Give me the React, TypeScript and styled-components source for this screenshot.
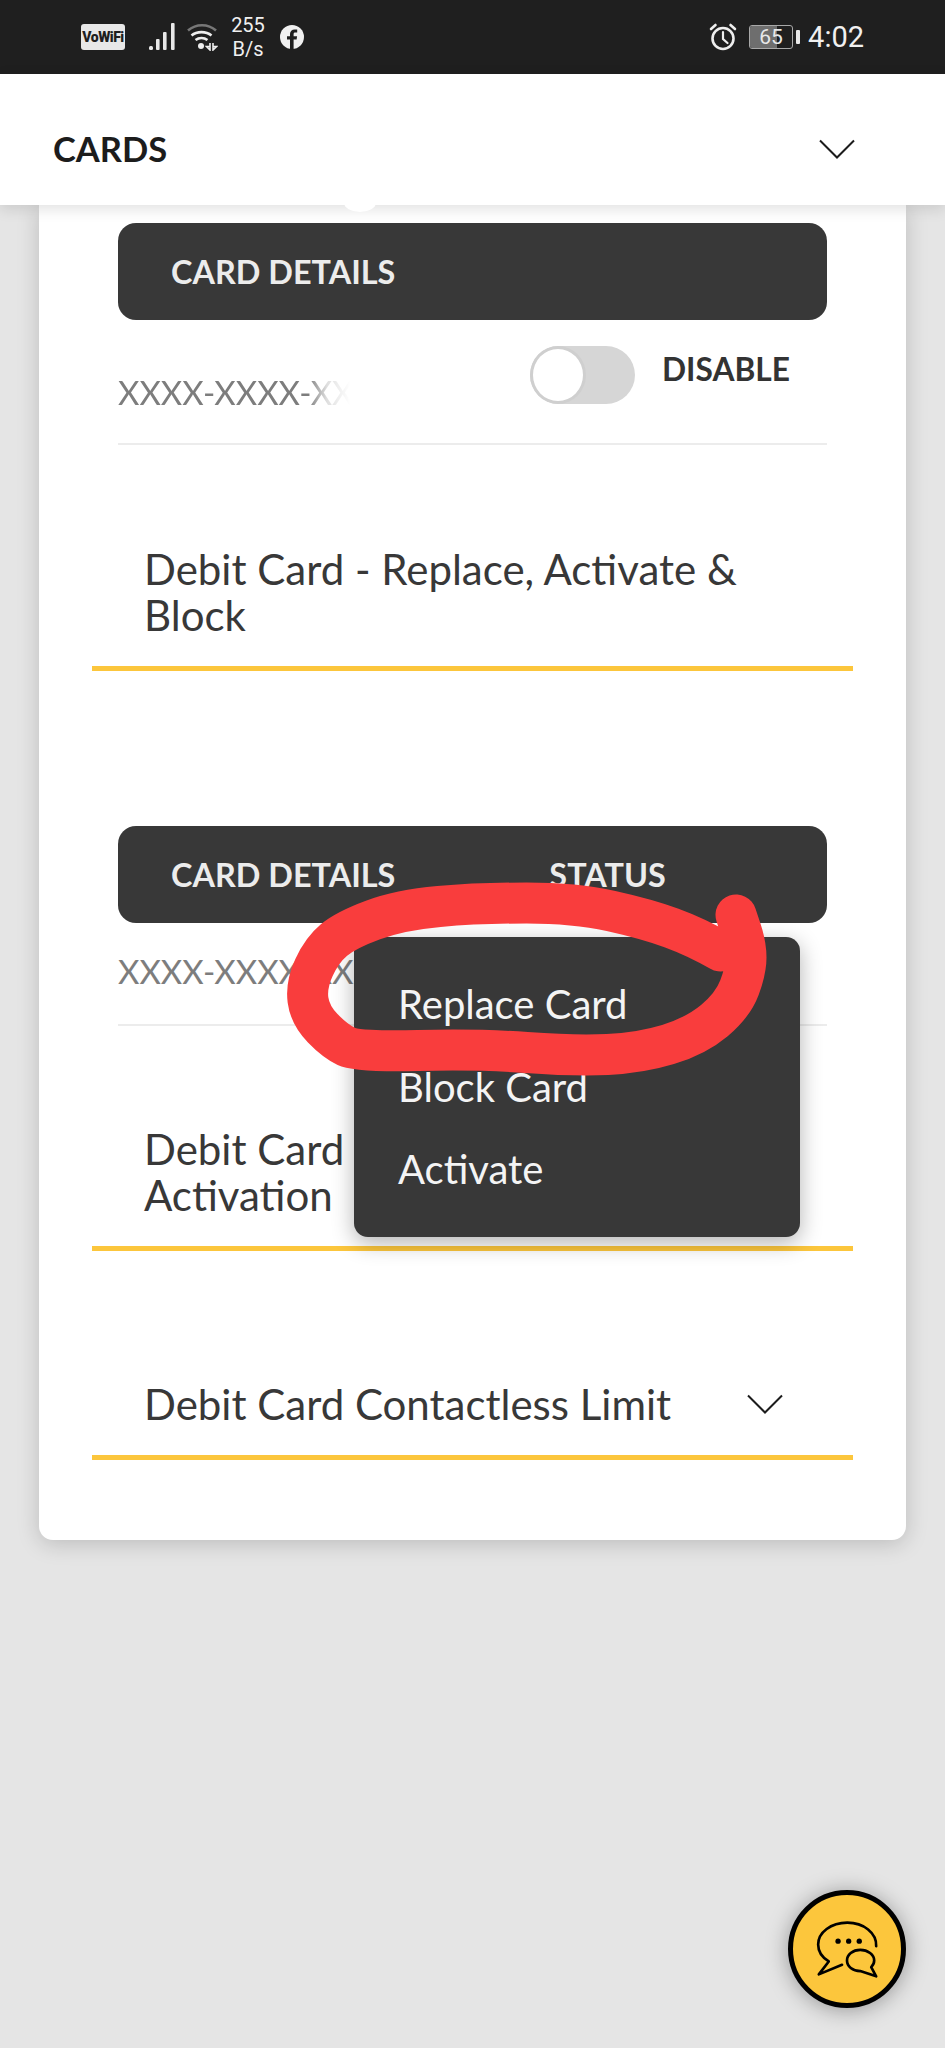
import React from "react";
import styled, { createGlobalStyle } from "styled-components";

const GlobalStyle = createGlobalStyle`
  html, body {
    margin: 0;
    padding: 0;
    background: #e5e5e5;
    font-family: "Lato", "Liberation Sans", sans-serif;
  }
`;

const Page = styled.div`
  position: relative;
  width: 945px;
  height: 2048px;
  overflow: hidden;
  background: #e5e5e5;
`;

const StatusBar = styled.div`
  display: flex;
  align-items: center;
  justify-content: space-between;
  height: 74px;
  padding: 0 81px 0 81px;
  box-sizing: border-box;
  background: #1f1f1f;
  color: #f0f0f0;
  font-family: "Roboto", sans-serif;
`;

const StatusGroup = styled.div`
  display: flex;
  align-items: center;
`;

const VoWifi = styled.span`
  display: flex;
  align-items: center;
  justify-content: center;
  width: 44px;
  height: 26px;
  margin-right: 24px;
  border-radius: 3px;
  background: #e8e8e8;
  color: #1f1f1f;
  font-size: 14px;
  font-weight: 900;
  letter-spacing: -0.5px;
`;

const Speed = styled.div`
  display: flex;
  flex-direction: column;
  align-items: center;
  width: 36px;
  margin: 0 14px 0 12px;
  font-size: 20px;
  line-height: 24px;
`;

const BatteryBox = styled.div`
  display: flex;
  align-items: stretch;
  width: 44px;
  height: 24px;
  margin: 0 3px 0 12px;
  position: relative;
  box-sizing: border-box;
  border: 1.5px solid #a8a8a8;
  border-radius: 3px;
  overflow: hidden;
`;

const BatteryFill = styled.div<{ $level: number }>`
  width: ${(p) => p.$level}%;
  background: #6e6e6e;
`;

const BatteryLabel = styled.span`
  position: absolute;
  inset: 0;
  display: flex;
  align-items: center;
  justify-content: center;
  font-size: 21px;
  color: #e8e8e8;
`;

const BatteryNub = styled.span`
  width: 4px;
  height: 14px;
  border-radius: 1px;
  background: #e8e8e8;
`;

const Clock = styled.span`
  margin-left: 8px;
  font-size: 29px;
  font-weight: 400;
`;

const Header = styled.div`
  position: relative;
  z-index: 3;
  display: flex;
  align-items: center;
  justify-content: space-between;
  height: 131px;
  padding: 18px 90px 0 53px;
  box-sizing: border-box;
  background: #fff;
  box-shadow: 0 4px 14px rgba(0, 0, 0, 0.12);
`;

const HeaderTitle = styled.span`
  font-size: 34.5px;
  font-weight: 700;
  color: #1c1c1c;
`;

const Card = styled.div`
  position: relative;
  width: 867px;
  height: 1335px;
  margin-left: 39px;
  padding: 18px 53px 0;
  box-sizing: border-box;
  background: #fff;
  border-radius: 0 0 14px 14px;
  box-shadow: 0 4px 22px rgba(0, 0, 0, 0.18);
`;

const Bump = styled.span`
  position: absolute;
  top: -12px;
  left: 305px;
  width: 32px;
  height: 19px;
  border-radius: 50%;
  background: #fff;
  z-index: 4;
`;

const Table = styled.div<{ $top?: number }>`
  position: relative;
  z-index: 2;
  margin: ${(p) => p.$top ?? 0}px 26px 0;
`;

const TableHead = styled.div`
  display: flex;
  align-items: center;
  height: 97px;
  padding-left: 53px;
  border-radius: 18px;
  background: #383838;
  color: #ececec;
  font-size: 32.4px;
  font-weight: 700;
`;

const StatusHead = styled.span`
  margin-left: 154px;
`;

const TableRow = styled.div<{ $height: number }>`
  position: relative;
  display: flex;
  height: ${(p) => p.$height}px;
  box-sizing: border-box;
  border-bottom: 2px solid #ececec;
`;

const CardNumber = styled.div<{ $top: number; $width: number }>`
  width: ${(p) => p.$width}px;
  margin-top: ${(p) => p.$top}px;
  overflow: hidden;
  white-space: nowrap;
  color: #7d7d7d;
  font-size: 33px;
  font-weight: 400;
  line-height: 40px;
`;

const FadedNumber = styled(CardNumber)`
  -webkit-mask-image: linear-gradient(90deg, #000 82%, rgba(0, 0, 0, 0.25) 90%, transparent 100%);
  mask-image: linear-gradient(90deg, #000 82%, rgba(0, 0, 0, 0.25) 90%, transparent 100%);
`;

const ToggleCell = styled.div`
  display: flex;
  align-items: flex-start;
  margin: 26px 0 0 180px;
`;

const Track = styled.span`
  display: flex;
  width: 105px;
  height: 58px;
  border-radius: 29px;
  background: #d6d6d6;
`;

const Thumb = styled.span`
  width: 56px;
  height: 58px;
  box-sizing: border-box;
  border: 3px solid #cfcfcf;
  border-radius: 50%;
  background: #fff;
`;

const ToggleLabel = styled.span`
  margin: 3px 0 0 27px;
  color: #333;
  font-size: 31.7px;
  font-weight: 700;
  line-height: 40px;
`;

const Menu = styled.div`
  position: absolute;
  z-index: 4;
  top: 111px;
  left: 236px;
  display: flex;
  flex-direction: column;
  width: 446px;
  height: 300px;
  padding-top: 26px;
  box-sizing: border-box;
  border-radius: 14px;
  background: #383838;
  box-shadow: 0 6px 22px rgba(0, 0, 0, 0.3);
`;

const MenuItem = styled.div`
  height: 82.5px;
  padding-left: 44px;
  color: #f4f4f4;
  font-size: 40px;
  line-height: 82px;
`;

const Accordion = styled.div<{ $top: number }>`
  display: flex;
  align-items: center;
  justify-content: space-between;
  margin-top: ${(p) => p.$top}px;
  padding: 0 70px 28px 52px;
  border-bottom: 5px solid #fcc63c;
`;

const AccordionTitle = styled.div`
  color: #383838;
  font-size: 42px;
  line-height: 46px;
`;

const Fab = styled.div`
  position: absolute;
  z-index: 5;
  left: 788px;
  top: 1890px;
  display: flex;
  align-items: center;
  justify-content: center;
  width: 118px;
  height: 118px;
  box-sizing: border-box;
  border: 5px solid #000;
  border-radius: 50%;
  background: #fcc63c;
  box-shadow: 0 2px 22px rgba(0, 0, 0, 0.35);
`;

const Scribble = styled.svg`
  position: absolute;
  z-index: 6;
  left: 0;
  top: 0;
  pointer-events: none;
`;

const Chevron: React.FC<{ width: number; height: number; color: string }> = ({ width, height, color }) => (
  <svg width={width} height={height} viewBox="0 0 36 20" fill="none">
    <path d="M1 1.5 L18 18.5 L35 1.5" stroke={color} strokeWidth="2" vectorEffect="non-scaling-stroke" />
  </svg>
);

const SignalIcon = () => (
  <svg width="28" height="28" viewBox="0 0 28 28" fill="#e8e8e8">
    <rect x="0" y="23" width="4" height="4" rx="1.5" />
    <rect x="7" y="16" width="3.6" height="11" rx="1" />
    <rect x="14" y="9" width="3.6" height="18" rx="1" />
    <rect x="22" y="0" width="3.6" height="27" rx="1" />
  </svg>
);

const WifiIcon = () => (
  <svg width="32" height="28" viewBox="0 0 32 28" fill="none" style={{ marginLeft: 9 }}>
    <path d="M2 7.5 C10 0.5 22 0.5 30 7.5" stroke="#777" strokeWidth="2.6" />
    <path d="M5.5 12.5 C11 8 20 8 25.5 12.5" stroke="#eee" strokeWidth="2.6" />
    <path d="M9.5 17 C13 14.5 18 14.5 21.5 17" stroke="#eee" strokeWidth="2.6" />
    <circle cx="15" cy="23" r="3" fill="#eee" />
    <path d="M24 20 V27 L20.5 23.5 H24 M27 20 V27 L30.5 23.5 H27" stroke="#eee" strokeWidth="1.6" />
  </svg>
);

const FacebookIcon = () => (
  <svg width="24" height="24" viewBox="0 0 24 24">
    <circle cx="12" cy="12" r="12" fill="#f0f0f0" />
    <path
      d="M13.6 24 V14.6 H16.6 L17.1 11.2 H13.6 V9.2 C13.6 8.2 14 7.6 15.3 7.6 H17.2 V4.6 C16.6 4.5 15.6 4.4 14.7 4.4 C11.9 4.4 10 6.1 10 9 V11.2 H7 V14.6 H10 V24 Z"
      fill="#1f1f1f"
    />
  </svg>
);

const AlarmIcon = () => (
  <svg width="28" height="28" viewBox="0 0 28 28" fill="none" stroke="#eee" strokeWidth="2.6" strokeLinecap="round">
    <circle cx="14" cy="15.5" r="10.5" />
    <path d="M14 9 V16 L18.5 20" strokeWidth="2.2" />
    <path d="M2 6 L6.5 2 M26 6 L21.5 2" />
  </svg>
);

const ChatIcon = () => (
  <svg width="70" height="63" viewBox="150 160 210 190" fill="none" stroke="#000" strokeWidth="8" strokeLinecap="round" strokeLinejoin="round">
    <path d="M343 245 C345 205 305 174 256 174 C207 174 168 203 168 240 C168 262 180 279 200 291 L170 330 L240 301" />
    <path d="M295 256 C272 256 255 271 255 288 C255 306 272 320 295 320 L343 336 L328 308 C334 302 337 295 337 288 C337 271 318 256 295 256 Z" />
    <g fill="#000" stroke="none">
      <circle cx="228" cy="230" r="8" />
      <circle cx="260" cy="230" r="8" />
      <circle cx="292" cy="230" r="8" />
    </g>
  </svg>
);

// centre line of the red marker stroke, smoothed through midpoints
const scribblePoints = [
  [736, 915], [746, 945], [746, 970], [733, 1005], [696, 1036], [640, 1053], [575, 1056],
  [478, 1049], [358, 1052], [335, 1041], [310, 1015], [306, 985], [322, 950], [346, 930],
  [400, 910], [478, 903], [575, 903], [647, 919], [696, 937], [745, 965],
];

const scribblePath = scribblePoints.reduce((d, [x, y], i) => {
  if (i === 0) return `M${x} ${y}`;
  const [px, py] = scribblePoints[i - 1];
  return `${d} Q${px} ${py} ${(px + x) / 2} ${(py + y) / 2}`;
}, "");

export default function App() {
  return (
    <Page>
      <GlobalStyle />
      <StatusBar>
        <StatusGroup>
          <VoWifi>VoWiFi</VoWifi>
          <SignalIcon />
          <WifiIcon />
          <Speed>
            <span>255</span>
            <span>B/s</span>
          </Speed>
          <FacebookIcon />
        </StatusGroup>
        <StatusGroup>
          <AlarmIcon />
          <BatteryBox>
            <BatteryFill $level={65} />
            <BatteryLabel>65</BatteryLabel>
          </BatteryBox>
          <BatteryNub />
          <Clock>4:02</Clock>
        </StatusGroup>
      </StatusBar>
      <Header>
        <HeaderTitle>CARDS</HeaderTitle>
        <Chevron width={36} height={20} color="#1c1c1c" />
      </Header>
      <Card>
        <Bump />
        <Table>
          <TableHead>CARD DETAILS</TableHead>
          <TableRow $height={125}>
            <FadedNumber $top={52} $width={232}>XXXX-XXXX-XXXX</FadedNumber>
            <ToggleCell>
              <Track>
                <Thumb />
              </Track>
              <ToggleLabel>DISABLE</ToggleLabel>
            </ToggleCell>
          </TableRow>
        </Table>
        <Accordion $top={101}>
          <AccordionTitle>Debit Card - Replace, Activate &amp; Block</AccordionTitle>
        </Accordion>
        <Table $top={155}>
          <TableHead>
            CARD DETAILS
            <StatusHead>STATUS</StatusHead>
          </TableHead>
          <TableRow $height={103}>
            <CardNumber $top={28} $width={300}>XXXX-XXXX-XXXX</CardNumber>
          </TableRow>
          <Menu>
            <MenuItem>Replace Card</MenuItem>
            <MenuItem>Block Card</MenuItem>
            <MenuItem>Activate</MenuItem>
          </Menu>
        </Table>
        <Accordion $top={100}>
          <AccordionTitle>
            Debit Card
            <br />
            Activation
          </AccordionTitle>
        </Accordion>
        <Accordion $top={130}>
          <AccordionTitle>Debit Card Contactless Limit</AccordionTitle>
          <Chevron width={36} height={20} color="#1c1c1c" />
        </Accordion>
      </Card>
      <Fab>
        <ChatIcon />
      </Fab>
      <Scribble width="945" height="2048" viewBox="0 0 945 2048" fill="none">
        <path d={scribblePath} stroke="#f93d3d" strokeWidth="41" strokeLinecap="round" strokeLinejoin="round" />
      </Scribble>
    </Page>
  );
}
